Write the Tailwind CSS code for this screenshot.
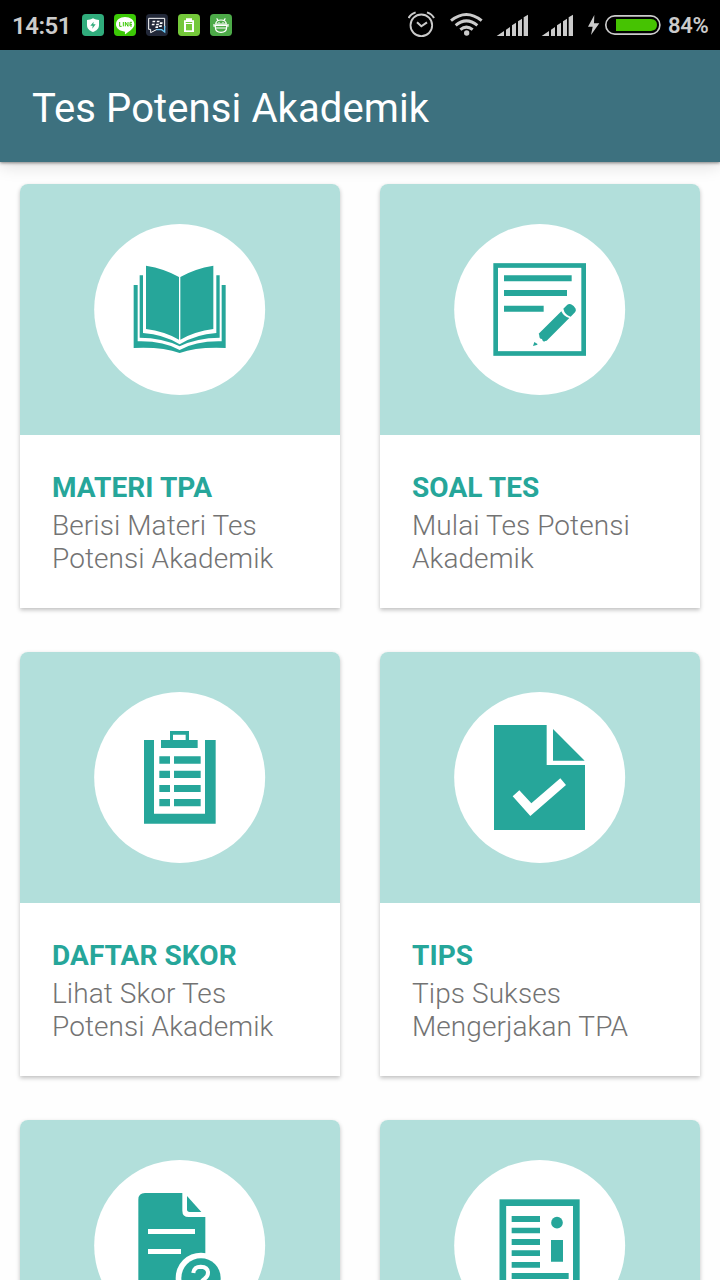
<!DOCTYPE html>
<html lang="id">
<head>
  <meta charset="UTF-8" />
  <meta name="viewport" content="width=device-width, initial-scale=1" />
  <title>Tes Potensi Akademik</title>
  <script src="https://cdn.jsdelivr.net/npm/@tailwindcss/browser@4"></script>
</head>
<body class="h-screen overflow-hidden bg-[#fefefe] font-['Roboto',sans-serif]">

  <!-- Status bar -->
  <div class="flex h-[50px] items-center bg-black text-[#cbcbcb]">
    <span class="ml-3 w-[70px] text-2xl font-semibold leading-[50px] tracking-[-0.5px] pt-0.5">14:51</span>
    <div class="flex gap-2.5">
      <svg class="size-[22px]" viewBox="0 0 66 66">
        <rect width="66" height="66" rx="11" fill="#30ac7c" />
        <path d="M33 13c6 4 12 5 18 5v15c0 11-7 17-18 21-11-4-18-10-18-21V18c6 0 12-1 18-5z" fill="#fff" />
        <path d="M35 23L25 35h7l-1 9 10-13h-7z" fill="#30ac7c" />
      </svg>
      <svg class="size-[22px]" viewBox="0 0 66 66">
        <rect width="66" height="66" rx="11" fill="#3cc906" />
        <path d="M33 9c16 0 28 9 28 22 0 12-14 20-27 30-2 0-1-5-1-8C17 52 6 43 6 31 6 18 18 9 33 9z" fill="#fff" />
        <path d="M17 24v13h6M28 24v13M34 37V24l8 13V24M54 25h-6v11h6M48 31h6" fill="none" stroke="#3cc906" stroke-width="3" />
      </svg>
      <svg class="size-[22px]" viewBox="0 0 66 66">
        <rect width="66" height="66" rx="11" fill="#222838" />
        <path d="M33 46l-19 10V46H8V13h48v28" fill="none" stroke="#fff" stroke-width="3" />
        <path d="M56 36v18l-9-7H31" fill="none" stroke="#6dcaf5" stroke-width="4" />
        <path d="M20 20h8l-1 5h-8zM33 20h8l-1 5h-8zM18 29h8l-1 5h-8zM31 29h8l-1 5h-8zM42 25h8l-1 5h-8zM40 34h8l-1 5h-8zM29 37h8l-1 5h-8z" fill="#fff" />
      </svg>
      <svg class="size-[22px]" viewBox="0 0 66 66">
        <rect width="66" height="66" rx="11" fill="#74c83a" />
        <path d="M24 13h18v6h6v35H18V19h6z" fill="#fff" />
        <path d="M23 24h20v3H23z" fill="#74c83a" />
        <path d="M24 30h18v19H24z" fill="#74c83a" />
      </svg>
      <svg class="size-[22px]" viewBox="0 0 66 66">
        <rect width="66" height="66" rx="11" fill="#4caa48" />
        <path d="M17 30c1-8 7-12 16-12s15 4 16 12zM20 13l5 8M46 13l-5 8M16 34v6c0 9 7 15 17 15s17-6 17-15v-6zM16 42h34M12 30v8M54 30v8" fill="none" stroke="#fff" stroke-width="3.5" />
        <circle cx="27" cy="26" r="2" fill="#fff" /><circle cx="39" cy="26" r="2" fill="#fff" />
      </svg>
    </div>

    <div class="ml-auto flex items-center">
      <svg class="h-[50px] w-[27px]" viewBox="24 0 81 150" fill="none" stroke="#cbcbcb">
        <circle cx="64" cy="76" r="32.500" stroke-width="5.500" />
        <path d="M51 67l13 12 17-12" stroke-width="6" />
        <path d="M26 54q6-12 21-17M102 54q-6-12-21-17" stroke-width="6" />
      </svg>
      <svg class="ml-[15px] h-[50px] w-[33px]" viewBox="150 0 99 150" fill="none" stroke="#cbcbcb" stroke-width="9">
        <path d="M153 62q46-37 92 0M167 76q32-27 65 0M181 89q18-15 37 0" />
        <circle cx="200" cy="99" r="8" fill="#cbcbcb" stroke="none" />
      </svg>
      <svg class="ml-[13px] h-[50px] w-[33px]" viewBox="288 0 99 150" fill="#cbcbcb">
        <path d="M290 108l22-15v15zM318 89l12-8v27h-12zM336 76l12-8v40h-12zM354 64l12-8v52h-12zM371 52l13-8v64h-13z" />
      </svg>
      <svg class="ml-3 h-[50px] w-[33px]" viewBox="288 0 99 150" fill="#cbcbcb">
        <path d="M290 108l22-15v15zM318 89l12-8v27h-12zM336 76l12-8v40h-12zM354 64l12-8v52h-12zM371 52l13-8v64h-13z" />
      </svg>
      <svg class="ml-[13px] h-[50px] w-[13px]" viewBox="561 0 39 150" fill="#cbcbcb">
        <path d="M583 45l-19 35h14l-5 25 25-35h-16z" />
      </svg>
      <svg class="ml-1 h-[50px] w-[58px]" viewBox="612 0 174 150">
        <rect x="617.500" y="47.500" width="162" height="55" rx="27" fill="none" stroke="#cbcbcb" stroke-width="5" />
        <path d="M648 57h105q18 2 18 18t-18 18H648z" fill="#46c302" />
      </svg>
      <span class="ml-1.5 w-[52px] text-[22px] font-semibold leading-[50px] tracking-[-0.3px] pt-0.5">84%</span>
    </div>
  </div>

  <!-- App bar -->
  <header class="relative flex h-28 items-center bg-[#3d717f] pl-8 pt-1.5 shadow-[0_1px_3px_rgba(0,0,0,0.45),0_4px_16px_rgba(0,0,0,0.13)]">
    <h1 class="text-[40px] leading-none tracking-[0.1px] text-white">Tes Potensi Akademik</h1>
  </header>

  <!-- Menu -->
  <main class="grid grid-cols-2 gap-x-10 gap-y-11 px-5 pt-[22px]">

    <div class="h-[424px] rounded-t-lg bg-white shadow-[0_2px_4px_rgba(0,0,0,0.25)]">
      <div class="flex h-[251px] justify-center rounded-t-lg bg-[#b2dfdb] pt-9">
        <svg class="size-[180px]" viewBox="0 0 540 540" fill="#26a69a">
          <circle cx="269" cy="268.500" r="256.500" fill="#fff" />
          <path d="M168 137q56 9 99 34v188q-44-25-99-32zM370 137q-56 9-99 34v188q44-25 99-32z" />
          <path d="M149 166h10v173q62 4 110 34 48-30 110-34V166h10v187q-68 0-120 26-52-26-120-26z" />
          <path d="M131 195h12v169q76-2 126 26 50-28 126-26V195h12v189q-86-4-138 15-52-19-138-15z" />
        </svg>
      </div>
      <div class="px-8 pt-9 text-[28px] leading-[33px] tracking-[0.08px]">
        <h2 class="mb-[5px] font-bold text-[#26a69a]">MATERI TPA</h2>
        <p class="font-light text-[#737373]">Berisi Materi Tes<br>Potensi Akademik</p>
      </div>
    </div>

    <div class="h-[424px] rounded-t-lg bg-white shadow-[0_2px_4px_rgba(0,0,0,0.25)]">
      <div class="flex h-[251px] justify-center rounded-t-lg bg-[#b2dfdb] pt-9">
        <svg class="size-[180px]" viewBox="0 0 540 540" fill="#26a69a">
          <circle cx="269" cy="268.500" r="256.500" fill="#fff" />
          <rect x="137" y="136.500" width="264" height="264" fill="none" stroke="#26a69a" stroke-width="14" />
          <path d="M162 166h203v18H162zM162 210h189v18H162zM162 257h119v18H162z" />
          <path d="M334 274q7 15 24 20l-68 68q-5 0-8 3-6-3-6-8-8 0-8-9 0-4-2-7z" />
          <path d="M340 266l12-12q5-4 11-1 9 4 14 13 2 6-2 11l-13 13q-18-6-22-24z" />
          <path d="M253 366q7 3 10 8l-14 4z" />
        </svg>
      </div>
      <div class="px-8 pt-9 text-[28px] leading-[33px] tracking-[0.08px]">
        <h2 class="mb-[5px] font-bold text-[#26a69a]">SOAL TES</h2>
        <p class="font-light text-[#737373]">Mulai Tes Potensi<br>Akademik</p>
      </div>
    </div>

    <div class="h-[424px] rounded-t-lg bg-white shadow-[0_2px_4px_rgba(0,0,0,0.25)]">
      <div class="flex h-[251px] justify-center rounded-t-lg bg-[#b2dfdb] pt-9">
        <svg class="size-[180px]" viewBox="0 0 540 540" fill="#26a69a">
          <circle cx="269" cy="268.500" r="256.500" fill="#fff" />
          <path d="M162 156h30v221h153V156h32v251H162z" />
          <path fill-rule="evenodd" d="M240 129h57v27h26v24H213v-24h27zM249 140v16h38v-16z" />
          <path d="M208 205h32v22h-32zM252 205h80v22h-80zM208 248h32v22h-32zM252 248h80v22h-80zM208 291h32v21h-32zM252 291h80v21h-80zM208 333h32v22h-32zM252 333h80v22h-80z" />
        </svg>
      </div>
      <div class="px-8 pt-9 text-[28px] leading-[33px] tracking-[0.08px]">
        <h2 class="mb-[5px] font-bold text-[#26a69a]">DAFTAR SKOR</h2>
        <p class="font-light text-[#737373]">Lihat Skor Tes<br>Potensi Akademik</p>
      </div>
    </div>

    <div class="h-[424px] rounded-t-lg bg-white shadow-[0_2px_4px_rgba(0,0,0,0.25)]">
      <div class="flex h-[251px] justify-center rounded-t-lg bg-[#b2dfdb] pt-9">
        <svg class="size-[180px]" viewBox="0 0 540 540" fill="#26a69a">
          <circle cx="269" cy="268.500" r="256.500" fill="#fff" />
          <path d="M132 111h158v120h115v195H132z" />
          <path d="M309 123l95 95h-95z" />
          <path d="M188 325l20-18 36 39 87-75 17 20-107 93z" fill="#fff" />
        </svg>
      </div>
      <div class="px-8 pt-9 text-[28px] leading-[33px] tracking-[0.08px]">
        <h2 class="mb-[5px] font-bold text-[#26a69a]">TIPS</h2>
        <p class="font-light text-[#737373]">Tips Sukses<br>Mengerjakan TPA</p>
      </div>
    </div>

    <div class="h-[424px] rounded-t-lg bg-white shadow-[0_2px_4px_rgba(0,0,0,0.25)]">
      <div class="flex h-[251px] justify-center rounded-t-lg bg-[#b2dfdb] pt-9">
        <svg class="size-[180px]" viewBox="0 0 540 540" fill="#26a69a">
          <circle cx="269" cy="268.500" r="256.500" fill="#fff" />
          <path d="M165 111h112v53q0 19 19 19h50v240H165q-20 0-20-20V131q0-20 20-20z" />
          <path d="M291 120l43 48h-35q-8 0-8-8z" />
          <path d="M174 219h141v15H174zM174 279h99v15h-99z" fill="#fff" />
          <circle cx="333" cy="366" r="76" fill="#fff" />
          <circle cx="333" cy="366" r="59" />
          <path d="M310 351q2-19 22-19 22 1 22 18 0 11-10 18-12 8-12 20" fill="none" stroke="#fff" stroke-width="12" />
        </svg>
      </div>
    </div>

    <div class="h-[424px] rounded-t-lg bg-white shadow-[0_2px_4px_rgba(0,0,0,0.25)]">
      <div class="flex h-[251px] justify-center rounded-t-lg bg-[#b2dfdb] pt-9">
        <svg class="size-[180px]" viewBox="0 0 540 540" fill="#26a69a">
          <circle cx="269" cy="268.500" r="256.500" fill="#fff" />
          <rect x="158.500" y="140" width="220.500" height="270" fill="none" stroke="#26a69a" stroke-width="20" />
          <path d="M185 180h85v18h-85zM185 215h85v17h-85zM185 249h85v18h-85zM185 283h85v17h-85zM185 318h85v17h-85zM185 351h171v18H185zM303 252h36v65h-36z" />
          <circle cx="321" cy="200" r="17.500" />
        </svg>
      </div>
    </div>

  </main>
</body>
</html>
